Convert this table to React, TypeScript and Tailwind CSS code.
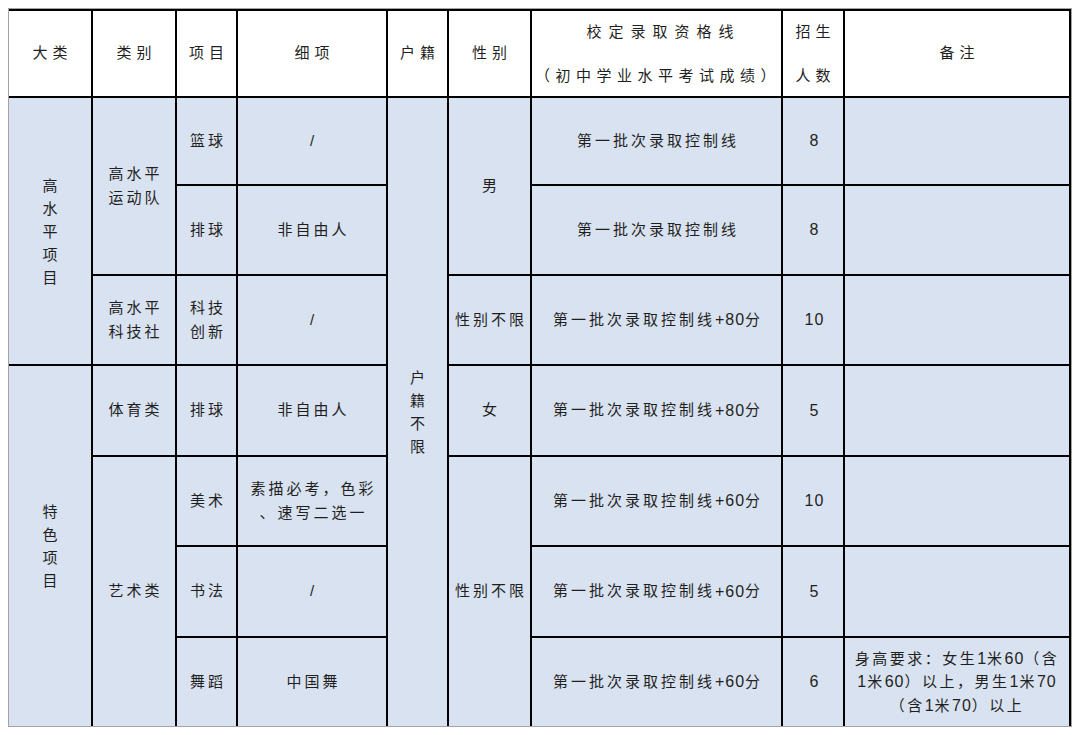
import React from 'react';

// Admission quota table: grid with 2px black gaps as the cell rules.
const font = { fontFamily: '"Liberation Sans", "Noto Sans CJK SC", sans-serif' };

function Cell({
  children,
  className = '',
  head = false,
}: {
  children?: React.ReactNode;
  className?: string;
  head?: boolean;
}) {
  return (
    <div
      className={`flex items-center justify-center text-center text-[15px] text-[#1f1f1f] ${
        head ? 'bg-white tracking-[5px] pl-[5px]' : 'bg-[#d9e2f0] tracking-[3px] pl-[3px]'
      } ${className}`}
    >
      {children}
    </div>
  );
}

// digits are set tighter and a touch larger than the CJK text
function N({ children }: { children: React.ReactNode }) {
  return <span className="text-[16px] tracking-[1px]">{children}</span>;
}

function Vertical({ text }: { text: string }) {
  return (
    <div className="flex flex-col items-center leading-[23px]">
      {text.split('').map((c, i) => (
        <span key={i}>{c}</span>
      ))}
    </div>
  );
}

const LINE = '第一批次录取控制线';

export default function App() {
  return (
    <div className="w-[1080px] h-[735px] bg-white pt-[8px] pl-[8px]" style={font}>
      <div className="w-[1064px] border border-[#a3a3a3]">
        <div className="grid grid-cols-[82px_82px_59px_148px_59px_81px_249px_60px_224px] grid-rows-[85px_86px_88px_88px_89px_88px_89px_88px] gap-[2px] bg-black pt-[2px] pr-[2px]">
          {/* header */}
          <Cell head>大类</Cell>
          <Cell head>类别</Cell>
          <Cell head>项目</Cell>
          <Cell head>细项</Cell>
          <Cell head>户籍</Cell>
          <Cell head>性别</Cell>
          <Cell head className="leading-[44px] !pl-0">
            <div className="whitespace-nowrap">
              <div className="tracking-[7px] pl-[14px]">校定录取资格线</div>
              <div className="tracking-[5.5px] pl-[3px]">（初中学业水平考试成绩）</div>
            </div>
          </Cell>
          <Cell head className="leading-[44px]">
            <div>
              招生
              <br />
              人数
            </div>
          </Cell>
          <Cell head>备注</Cell>

          {/* row 1 */}
          <Cell className="row-span-3">
            <Vertical text="高水平项目" />
          </Cell>
          <Cell className="row-span-2 leading-[24px]">
            <div>
              高水平
              <br />
              运动队
            </div>
          </Cell>
          <Cell>篮球</Cell>
          <Cell>/</Cell>
          <Cell className="row-span-7">
            <Vertical text="户籍不限" />
          </Cell>
          <Cell className="row-span-2">男</Cell>
          <Cell>{LINE}</Cell>
          <Cell><N>8</N></Cell>
          <Cell />

          {/* row 2 */}
          <Cell>排球</Cell>
          <Cell>非自由人</Cell>
          <Cell>{LINE}</Cell>
          <Cell><N>8</N></Cell>
          <Cell />

          {/* row 3 */}
          <Cell className="leading-[24px]">
            <div>
              高水平
              <br />
              科技社
            </div>
          </Cell>
          <Cell className="leading-[24px]">
            <div>
              科技
              <br />
              创新
            </div>
          </Cell>
          <Cell>/</Cell>
          <Cell>性别不限</Cell>
          <Cell>{LINE}<N>+80</N>分</Cell>
          <Cell><N>10</N></Cell>
          <Cell />

          {/* row 4 */}
          <Cell className="row-span-4">
            <Vertical text="特色项目" />
          </Cell>
          <Cell>体育类</Cell>
          <Cell>排球</Cell>
          <Cell>非自由人</Cell>
          <Cell>女</Cell>
          <Cell>{LINE}<N>+80</N>分</Cell>
          <Cell><N>5</N></Cell>
          <Cell />

          {/* row 5 */}
          <Cell className="row-span-3">艺术类</Cell>
          <Cell>美术</Cell>
          <Cell className="leading-[24px]">
            <div>
              素描必考，色彩
              <br />
              、速写二选一
            </div>
          </Cell>
          <Cell className="row-span-3">性别不限</Cell>
          <Cell>{LINE}<N>+60</N>分</Cell>
          <Cell><N>10</N></Cell>
          <Cell />

          {/* row 6 */}
          <Cell>书法</Cell>
          <Cell>/</Cell>
          <Cell>{LINE}<N>+60</N>分</Cell>
          <Cell><N>5</N></Cell>
          <Cell />

          {/* row 7 */}
          <Cell>舞蹈</Cell>
          <Cell>中国舞</Cell>
          <Cell>{LINE}<N>+60</N>分</Cell>
          <Cell><N>6</N></Cell>
          <Cell className="leading-[23.5px] !tracking-[2.5px] !pl-0">
            <div>
              身高要求：女生<N>1</N>米<N>60</N>（含
              <br />
              <N>1</N>米<N>60</N>）以上，男生<N>1</N>米<N>70</N>
              <br />
              （含<N>1</N>米<N>70</N>）以上
            </div>
          </Cell>
        </div>
      </div>
    </div>
  );
}
